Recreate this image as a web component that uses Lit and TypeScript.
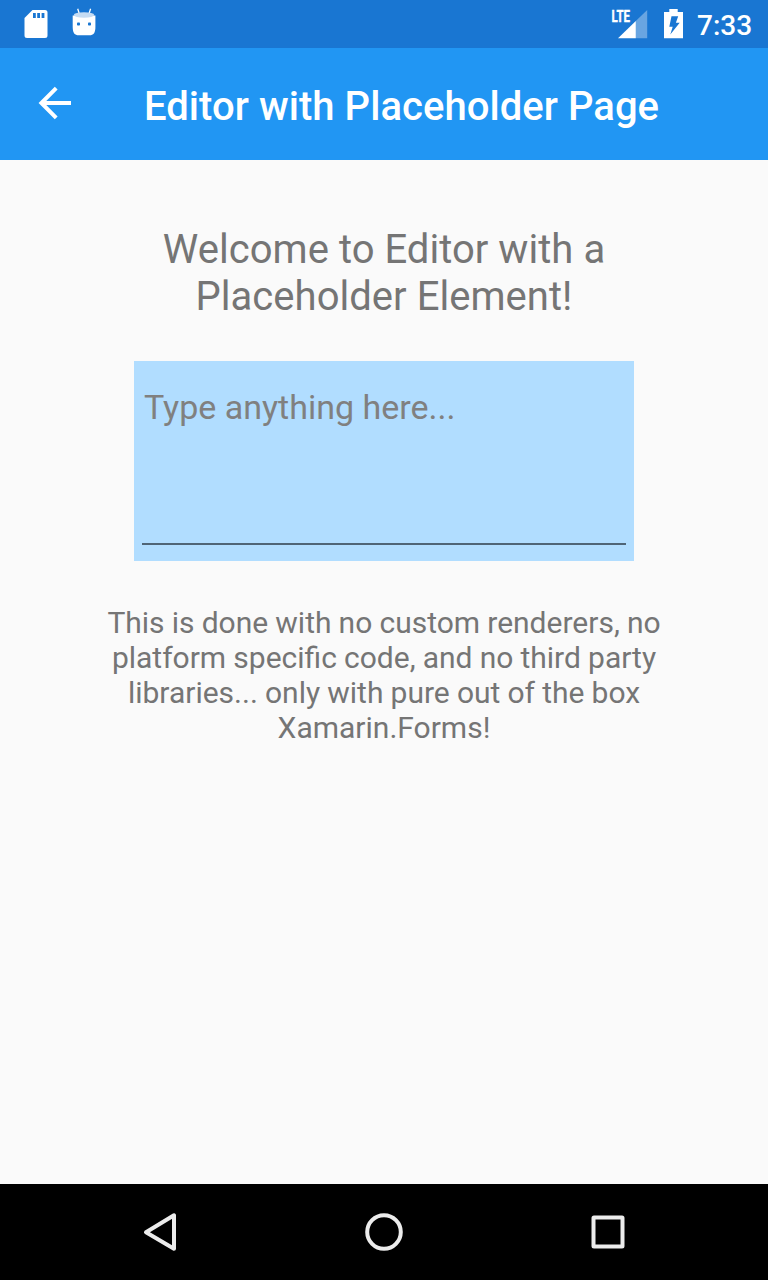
import { LitElement, html, css } from "lit";
import { customElement } from "lit/decorators.js";

@customElement("status-bar")
class StatusBar extends LitElement {
  static styles = css`
    :host {
      display: flex;
      justify-content: space-between;
      height: 48px;
      background: #1976d2;
      color: #fff;
    }
    .group {
      display: flex;
    }
    svg {
      display: block;
    }
    .lte {
      font: 700 16px Roboto, sans-serif;
    }
    .time {
      font: 500 28px/52px Roboto, sans-serif;
      width: 71px;
      white-space: nowrap;
    }
  `;

  render() {
    return html`
      <div class="group">
        <svg width="110" height="48" viewBox="0 0 110 48" fill="#fff">
          <path
            fill-rule="evenodd"
            d="M32.5 10H45a2.5 2.5 0 0 1 2.5 2.5v23A2.5 2.5 0 0 1 45 38H27a2.5 2.5 0 0 1-2.5-2.5V18zM33 13v5h2.800v-5zM37.200 13v5h2.800v-5zM41.600 13v5h2.800v-5z"
          />
          <path d="M72.700 15.500h22.700V27c0 6-2 8.300-6 8.300H78.700c-4 0-6-2.300-6-8.300z" />
          <path d="M77.700 8.700l1.600 5M90.600 8.700l-1.600 5" stroke="#fff" stroke-width="1.300" />
          <ellipse cx="84" cy="15" rx="10.200" ry="2.700" fill="#c6dcf3" />
          <rect x="77" y="22.500" width="3" height="3" rx=".8" fill="#1976d2" />
          <rect x="88" y="22.500" width="3" height="3" rx=".8" fill="#1976d2" />
        </svg>
      </div>
      <div class="group">
        <svg width="97" height="48" viewBox="600 0 97 48" fill="#fff">
          <path d="M647.200 10v28.300H635.800V21z" opacity=".35" />
          <path d="M635.800 21v17.300H618z" />
          <text class="lte" x="611.500" y="22.300" textLength="18.500" lengthAdjust="spacingAndGlyphs" stroke="#fff" stroke-width=".4">LTE</text>
          <path
            fill-rule="evenodd"
            d="M669.300 9h8.400v3h5.300v26.200h-19V12h5.300zM671.500 16.300L669.300 26.700h3.400L670.300 34.600 679.700 22.800h-3.800l2.300-6.500z"
          />
        </svg>
        <span class="time">7:33</span>
      </div>
    `;
  }
}

@customElement("title-bar")
class TitleBar extends LitElement {
  static styles = css`
    :host {
      display: flex;
      height: 112px;
      background: #2196f3;
      color: #fff;
    }
    .back {
      flex: none;
      width: 144px;
      height: 112px;
    }
    h1 {
      margin: 0;
      padding-top: 35px;
      font: 500 40px/47px Roboto, sans-serif;
      letter-spacing: 0.05px;
      white-space: nowrap;
    }
  `;

  render() {
    return html`
      <svg class="back" viewBox="0 48 144 112" fill="none" stroke="#fff" stroke-width="4">
        <path d="M71 103H42M56.200 88.200L41.400 103l14.800 14.800" />
      </svg>
      <h1>Editor with Placeholder Page</h1>
    `;
  }
}

@customElement("nav-bar")
class NavBar extends LitElement {
  static styles = css`
    :host {
      display: block;
      height: 96px;
      background: #000;
    }
    svg {
      display: block;
    }
  `;

  render() {
    return html`
      <svg width="768" height="96" viewBox="0 1184 768 96" fill="none" stroke="#ececec" stroke-width="4" stroke-linejoin="round">
        <path d="M174 1215.300v33.400L146 1232.200z" />
        <circle cx="384" cy="1232" r="16.800" />
        <rect x="593.500" y="1217.500" width="29" height="29" rx=".5" />
      </svg>
    `;
  }
}

@customElement("app-root")
class AppRoot extends LitElement {
  static styles = css`
    :host {
      display: flex;
      flex-direction: column;
      height: 1280px;
      background: #fafafa;
      font-family: Roboto, sans-serif;
      color: #757575;
    }
    main {
      flex: 1;
      display: flex;
      flex-direction: column;
      align-items: center;
      padding-top: 66px;
      text-align: center;
    }
    p {
      margin: 0;
    }
    .welcome {
      font-size: 40px;
      line-height: 47px;
      letter-spacing: 0.04px;
    }
    .editor {
      box-sizing: border-box;
      display: flex;
      width: 500px;
      height: 200px;
      margin: 41px 0 44px;
      padding: 0 8px 16px;
      background: #b1ddff;
    }
    .field {
      flex: 1;
      padding: 26px 2px 0;
      border-bottom: 2px solid #4f6476;
      font-size: 34px;
      line-height: 40px;
      text-align: left;
      color: #808080;
    }
    .note {
      font-size: 30px;
      line-height: 35px;
      word-spacing: -0.3px;
    }
  `;

  render() {
    return html`
      <status-bar></status-bar>
      <title-bar></title-bar>
      <main>
        <p class="welcome">Welcome to Editor with a<br />Placeholder Element!</p>
        <div class="editor"><div class="field">Type anything here...</div></div>
        <p class="note">
          This is done with no custom renderers, no<br />platform specific code, and no third party<br />libraries... only
          with pure out of the box<br />Xamarin.Forms!
        </p>
      </main>
      <nav-bar></nav-bar>
    `;
  }
}
